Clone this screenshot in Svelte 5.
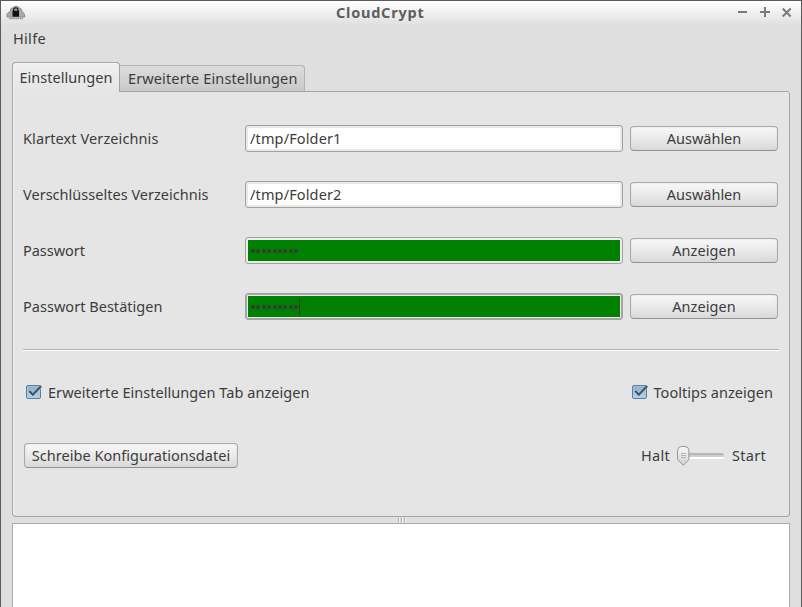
<script>
  let source = $state('/tmp/Folder1');
  let target = $state('/tmp/Folder2');
  const secret = Array(9).fill(0);

  // Tracks a label out (or in) so that it fills the given width.
  function fit(node, width) {
    const natural = node.getBoundingClientRect().width;
    const spacing = (width - natural) / node.textContent.length;
    node.style.letterSpacing = `${spacing}px`;
  }
</script>

{#snippet check()}
  <svg class="check" width="17" height="16" viewBox="0 0 17 16">
    <defs>
      <linearGradient id="blue" x1="0" y1="0" x2="0" y2="1">
        <stop offset="0" stop-color="#86afd0" />
        <stop offset="1" stop-color="#b3d3ec" />
      </linearGradient>
    </defs>
    <rect x="0.5" y="1.5" width="14" height="13" rx="1.5" fill="url(#blue)" stroke="#5b7c96" />
    <rect x="1.5" y="2.5" width="12" height="11" rx="1" fill="none" stroke="#b2d0e6" stroke-opacity=".6" />
    <path d="M3.3 7.4 L6.8 11.2 L15 2.6" fill="none" stroke="#c8e0f2" stroke-width="3.4" opacity=".5" />
    <path d="M3.3 7 L6.8 10.7 L15.2 2" fill="none" stroke="#42525f" stroke-width="2.1" />
  </svg>
{/snippet}

<div class="window">
  <header>
    <svg class="logo" width="20" height="16" viewBox="0 0 20 16">
      <path d="M1 12 L1 9 Q2 7 4 7 Q4 3 7 2.5 Q10 -0.5 13 2.5 Q16 3.5 16 6.5 Q19 8 19 12 Z" fill="#a9a9a9" stroke="#858585" stroke-width=".8" />
      <path d="M7.6 6 V4.8 Q7.6 2.8 9.8 2.8 Q12 2.8 12 4.8 V6" fill="none" stroke="#222" stroke-width="1.3" />
      <rect x="6.5" y="5.7" width="6.5" height="6" fill="#111" />
      <path d="M3 13.6 H17" stroke="#8d8d8d" stroke-width="1.5" stroke-dasharray="1.5 .6" />
    </svg>
    <h1><span use:fit={88.5}>CloudCrypt</span></h1>
    <svg class="controls" width="56" height="12" viewBox="0 0 56 12" fill="none" stroke="#7b7b7b" stroke-width="2">
      <path d="M0 6 H9 M22 6 H32 M27 1 V11" />
      <path d="M44.7 2.5 L52.7 10.5 M52.7 2.5 L44.7 10.5" />
    </svg>
  </header>
  <nav><span use:fit={33}>Hilfe</span></nav>

  <main>
    <div class="tabs">
      <div class="tab active"><span use:fit={93}>Einstellungen</span></div>
      <div class="tab"><span use:fit={169.5}>Erweiterte Einstellungen</span></div>
    </div>
    <section>
      <div class="row">
        <label for="source"><span use:fit={135.5}>Klartext Verzeichnis</span></label>
        <div class="field" id="source"><span use:fit={91.5}>{source}</span></div>
        <button><span use:fit={74.5}>Auswählen</span></button>
      </div>
      <div class="row">
        <label for="target"><span use:fit={185.5}>Verschlüsseltes Verzeichnis</span></label>
        <div class="field" id="target"><span use:fit={91.5}>{target}</span></div>
        <button><span use:fit={74.5}>Auswählen</span></button>
      </div>
      <div class="row">
        <label for="pass"><span use:fit={62}>Passwort</span></label>
        <div class="field valid" id="pass">{#each secret as _}<i></i>{/each}</div>
        <button><span use:fit={63.5}>Anzeigen</span></button>
      </div>
      <div class="row">
        <label for="confirm"><span use:fit={139.5}>Passwort Bestätigen</span></label>
        <div class="field valid focus" id="confirm">{#each secret as _}<i></i>{/each}<b></b></div>
        <button><span use:fit={63.5}>Anzeigen</span></button>
      </div>
      <hr />
      <div class="options">
        <div class="option">{@render check()}<span use:fit={261.5}>Erweiterte Einstellungen Tab anzeigen</span></div>
        <div class="option">{@render check()}<span use:fit={119.5}>Tooltips anzeigen</span></div>
      </div>
      <div class="actions">
        <button class="write"><span use:fit={198.5}>Schreibe Konfigurationsdatei</span></button>
        <div class="switch">
          <span use:fit={29}>Halt</span>
          <svg width="48" height="22" viewBox="0 0 48 22">
            <defs>
              <linearGradient id="knob" x1="0" y1="0" x2="0" y2="1">
                <stop offset="0" stop-color="#f8f8f8" />
                <stop offset="1" stop-color="#d2d2d2" />
              </linearGradient>
            </defs>
            <rect x="2" y="9" width="45" height="5" rx="2" fill="#fff" />
            <rect x="2" y="8" width="45" height="4" rx="2" fill="#b7b7b7" />
            <rect x="3" y="10" width="44" height="2" rx="1" fill="#cdcdcd" />
            <path d="M.6 5.5 Q.6 1.5 4.5 1.5 H8 Q11.9 1.5 11.9 5.5 V14.5 L6.3 20.3 L.6 14.5 Z" fill="url(#knob)" stroke="#959595" />
            <path d="M4 8.5 H9 M4 10.5 H9 M4 12.5 H9" stroke="#b4b4b4" />
          </svg>
          <span use:fit={34}>Start</span>
        </div>
      </div>
    </section>
    <div class="splitter"><i></i><i></i><i></i></div>
    <div class="log"></div>
  </main>
</div>

<style>
  :global(body) { overflow: hidden; }
  .window {
    box-sizing: border-box;
    width: 802px;
    height: 607px;
    border: 1px solid #5c5c5c;
    border-bottom: 0;
    display: flex;
    flex-direction: column;
    background: #dfdfdf;
    color: #3c3c3c;
    font: 14.5px/20px "Noto Sans", sans-serif;
    white-space: nowrap;
  }
  header {
    height: 25px;
    flex: none;
    display: grid;
    grid-template-columns: 100px 1fr 100px;
    background: linear-gradient(#fff, #f2f2f2 40%, #dfdfdf);
  }
  .logo { margin: 4px 0 0 5px; }
  h1 {
    margin: 0;
    padding-left: 235px;
    font-size: 14.5px;
    line-height: 23px;
    font-weight: 700;
    color: #5e5e5e;
  }
  .controls { margin: 5px 0 0 37px; }
  nav { height: 36px; flex: none; padding: 2px 0 0 12px; box-sizing: border-box; }
  main { flex: 1; min-height: 0; display: flex; flex-direction: column; margin: 0 11px; }
  .tabs { display: flex; align-items: flex-end; height: 30px; flex: none; }
  .tab {
    box-sizing: border-box;
    height: 27px;
    width: 185px;
    padding: 2px 0 0 8px;
    border: 1px solid #b2b2b2;
    border-left: 0;
    border-bottom: 0;
    border-radius: 0 4px 0 0;
    background: linear-gradient(#dcdcdc, #c9c9c9);
  }
  .tab.active {
    position: relative;
    width: 108px;
    height: 30px;
    padding: 4px 0 0 6.5px;
    border: 1px solid #a5a5a5;
    border-bottom: 0;
    border-radius: 4px 4px 0 0;
    background: linear-gradient(#f0f0f0, #e5e5e5);
    box-shadow: inset 1px 1px #f5f5f5;
  }
  section {
    box-sizing: border-box;
    height: 426px;
    flex: none;
    margin-top: -1px;
    padding: 34px 10px 0;
    border: 1px solid #a5a5a5;
    border-top: 0;
    border-radius: 0 4px 4px 4px;
    background:
      linear-gradient(#a5a5a5, #a5a5a5) 107px 0 / 100% 1px no-repeat,
      #e5e5e5;
    box-shadow: inset 1px 0 #f0f0f0;
  }
  .row { display: grid; grid-template-columns: 222px 378px 148px; align-items: center; height: 27px; margin-bottom: 29px; }
  .row label { padding-bottom: 2px; }
  .row button { margin-left: 7px; width: 148px; }
  .field {
    box-sizing: border-box;
    height: 27px;
    display: flex;
    align-items: center;
    border: 1px solid #a2a2a2;
    border-radius: 3px;
    padding: 0 4px;
    background: linear-gradient(#fff, #fff) 2px 2px / 372px 21px no-repeat, #e9e9e9;
  }
  .field span { padding-bottom: 2px; }
  .field.valid {
    background: linear-gradient(#008000, #008000) 2px 2px / 372px 21px no-repeat, #eaeaea;
    padding-left: 5px;
  }
  .field.focus { box-shadow: inset 0 0 0 1px #a5a5a5; }
  .field i { width: 4px; height: 4px; border-radius: 50%; background: #38383b; margin-right: 1.4px; margin-top: 1px; }
  .field b { width: 1px; height: 17px; background: #333; margin-left: -1px; }
  button {
    box-sizing: border-box;
    height: 25px;
    margin: 0;
    padding: 0 0 2px;
    border: 1px solid #a9a9a9;
    border-bottom-color: #929292;
    border-radius: 4px;
    background: linear-gradient(#f8f8f8, #eaeaea 50%, #d9d9d9);
    box-shadow: inset 0 0 2px #d7d7d7;
    color: inherit;
    font: inherit;
  }
  hr { margin: 0; height: 1px; border: 0; border-top: 1px solid #b5b5b5; background: #fff; }
  .options { display: flex; justify-content: space-between; margin: 31px 6px 0 3px; height: 20px; }
  .option { display: flex; align-items: center; gap: 5px; }
  .check { margin-top: 0; }
  .actions { display: flex; justify-content: space-between; margin: 41px 13px 0 1px; height: 25px; }
  .write { width: 214px; }
  .switch { display: flex; align-items: center; gap: 7px; }
  .switch span { padding-bottom: 2px; }
  .splitter { height: 6px; flex: none; display: flex; justify-content: center; gap: 2px; padding-top: 1px; box-sizing: border-box; }
  .splitter i { width: 1px; height: 4px; background: #b0b0b0; box-shadow: 1px 0 #f3f3f3; }
  .log { flex: 1; border: 1px solid #aaa; border-bottom: 0; background: #fff; }
</style>
